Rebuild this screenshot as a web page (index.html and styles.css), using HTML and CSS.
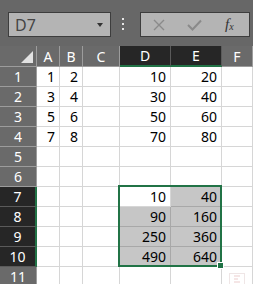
FILE: index.html
```html
<!DOCTYPE html>
<html lang="en">
<head>
  <meta charset="UTF-8" />
  <title>Sheet</title>
  <link rel="stylesheet" href="styles.css">
</head>
<body>
  <div class="formula-bar">
    <div class="name-box">
      <span>D7</span>
      <span class="caret"></span>
    </div>
    <div class="grip"><i></i><i></i><i></i></div>
    <div class="formula-box">
      <svg class="icon" width="12" height="12" viewBox="0 0 12 12"><path d="M1 1 L11 11 M11 1 L1 11" stroke="#8a8a8a" stroke-width="1.4" fill="none"/></svg>
      <svg class="icon" width="15" height="12" viewBox="0 0 15 12"><path d="M1 6 L5.5 10.5 L14 1.5" stroke="#8a8a8a" stroke-width="2" fill="none"/></svg>
      <span class="fx">f<sub>x</sub></span>
    </div>
  </div>

  <div class="sheet">
    <div class="ch corner"><span class="tri"></span></div>
    <div class="ch">A</div>
    <div class="ch">B</div>
    <div class="ch">C</div>
    <div class="ch on">D</div>
    <div class="ch on">E</div>
    <div class="ch">F</div>

    <div class="rh">1</div>
    <div class="c">1</div><div class="c">2</div><div class="c"></div><div class="c">10</div><div class="c">20</div><div class="c"></div>
    <div class="rh">2</div>
    <div class="c">3</div><div class="c">4</div><div class="c"></div><div class="c">30</div><div class="c">40</div><div class="c"></div>
    <div class="rh">3</div>
    <div class="c">5</div><div class="c">6</div><div class="c"></div><div class="c">50</div><div class="c">60</div><div class="c"></div>
    <div class="rh">4</div>
    <div class="c">7</div><div class="c">8</div><div class="c"></div><div class="c">70</div><div class="c">80</div><div class="c"></div>
    <div class="rh">5</div>
    <div class="c"></div><div class="c"></div><div class="c"></div><div class="c"></div><div class="c"></div><div class="c"></div>
    <div class="rh">6</div>
    <div class="c"></div><div class="c"></div><div class="c"></div><div class="c"></div><div class="c"></div><div class="c"></div>
    <div class="rh on">7</div>
    <div class="c"></div><div class="c"></div><div class="c"></div><div class="c">10</div><div class="c hl">40</div><div class="c"></div>
    <div class="rh on">8</div>
    <div class="c"></div><div class="c"></div><div class="c"></div><div class="c hl">90</div><div class="c hl">160</div><div class="c"></div>
    <div class="rh on">9</div>
    <div class="c"></div><div class="c"></div><div class="c"></div><div class="c hl">250</div><div class="c hl">360</div><div class="c"></div>
    <div class="rh on">10</div>
    <div class="c"></div><div class="c"></div><div class="c"></div><div class="c hl">490</div><div class="c hl">640</div><div class="c"></div>
    <div class="rh">11</div>
    <div class="c"></div><div class="c"></div><div class="c"></div><div class="c"></div><div class="c"></div><div class="c"></div>

    <div class="selection"><span class="handle"></span></div>
    <div class="quick">
      <svg width="16" height="14" viewBox="0 0 16 14"><rect x="0.5" y="0.5" width="15" height="13" fill="#fff" stroke="#efe6e6"/><path d="M5 3 H11 M5 6 H9 M5 9 H11" stroke="#f2dede" stroke-width="1.5"/></svg>
    </div>
  </div>
</body>
</html>
```

FILE: styles.css
```css
body {
  margin: 0;
  background: #fff;
  font-family: "Noto Sans", "Open Sans", sans-serif;
  overflow: hidden;
}

.formula-bar {
  height: 46px;
  background: #676767;
  display: flex;
  align-items: flex-start;
  padding: 12px 0 0 8px;
  box-sizing: border-box;
}

.name-box {
  width: 103px;
  height: 25px;
  box-sizing: border-box;
  background: #b4b4b4;
  border: 1px solid #3d3d3d;
  display: flex;
  align-items: center;
  justify-content: space-between;
  padding: 0 7px 0 6px;
  font-size: 16px;
  color: #454545;
}

.caret {
  width: 0;
  height: 0;
  border-left: 3.5px solid transparent;
  border-right: 3.5px solid transparent;
  border-top: 4px solid #333;
}

.grip {
  display: flex;
  flex-direction: column;
  gap: 3px;
  margin: 6px 0 0 11px;
}

.grip i {
  width: 2px;
  height: 2px;
  background: #e6e6e6;
}

.formula-box {
  width: 110px;
  height: 25px;
  box-sizing: border-box;
  margin-left: 16px;
  background: #b4b4b4;
  border: 1px solid #3d3d3d;
  display: flex;
  align-items: center;
  padding-left: 12px;
}

.icon { display: block; }
.icon + .icon { margin-left: 22px; }

.fx {
  margin-left: 23px;
  font-family: "Liberation Serif", serif;
  font-style: italic;
  font-size: 15px;
  color: #333;
  line-height: 1;
}

.fx sub {
  font-size: 10px;
  vertical-align: -1px;
}

.sheet {
  position: relative;
  display: grid;
  grid-template-columns: 37px 23px 23px 37px 51px 51px 31px;
  grid-template-rows: 21px;
  grid-auto-rows: 20px;
  font-size: 14px;
}

.ch, .rh {
  background: #6a6a6a;
  color: #fff;
  display: flex;
  align-items: center;
  justify-content: center;
  box-sizing: border-box;
  border-right: 1px solid #9c9c9c;
  border-bottom: 1px solid #9c9c9c;
}

.ch.on {
  background: #262626;
  border-right-color: #5a5a5a;
  border-bottom: 2px solid #217346;
}

.rh.on {
  background: #262626;
  border-bottom-color: #5a5a5a;
  border-right: 2px solid #217346;
}

.corner {
  justify-content: flex-end;
  align-items: flex-end;
  padding: 0 3px 3px 0;
}

.tri {
  width: 0;
  height: 0;
  border-left: 12px solid transparent;
  border-bottom: 12px solid #e2e2e2;
}

.c {
  box-sizing: border-box;
  border-right: 1px solid #d6d6d6;
  border-bottom: 1px solid #d6d6d6;
  display: flex;
  align-items: center;
  justify-content: flex-end;
  padding-right: 4px;
  color: #000;
}

.c.hl {
  background: #c6c6c6;
  border-color: #a8a8a8;
}

.selection {
  position: absolute;
  left: 118px;
  top: 139px;
  width: 104px;
  height: 82px;
  box-sizing: border-box;
  border: 2px solid #217346;
}

.handle {
  position: absolute;
  right: -4px;
  bottom: -4px;
  width: 5px;
  height: 5px;
  background: #217346;
  border: 1px solid #fff;
}

.quick {
  position: absolute;
  left: 229px;
  top: 226px;
}
```
